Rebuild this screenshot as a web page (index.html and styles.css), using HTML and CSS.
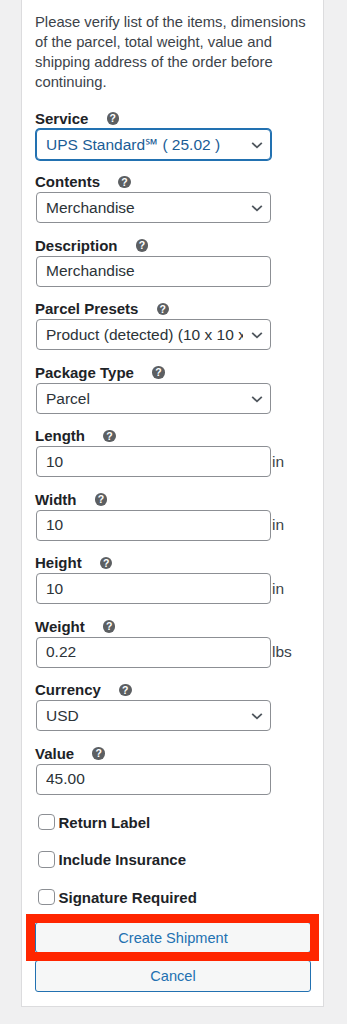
FILE: index.html
```html
<!DOCTYPE html>
<html lang="en">
    <head>
        <meta charset="UTF-8" />
        <meta name="viewport" content="width=device-width, initial-scale=1.0" />
        <title>Create Shipment</title>
        <link rel="stylesheet" href="styles.css">
    </head>

    <body>
        <div class="panel">
            <p class="note">Please verify list of the items, dimensions of the parcel, total weight, value and shipping address of the order before continuing.</p>

            <div class="field">
                <label class="field-label">Service <span class="help-tip">?</span></label>
                <div class="control">
                    <select class="is-focus">
                        <option>UPS Standard℠ ( 25.02 )</option>
                    </select>
                </div>
            </div>
            <div class="field">
                <label class="field-label">Contents <span class="help-tip">?</span></label>
                <div class="control">
                    <select>
                        <option>Merchandise</option>
                    </select>
                </div>
            </div>
            <div class="field">
                <label class="field-label">Description <span class="help-tip">?</span></label>
                <div class="control">
                    <input type="text" value="Merchandise" />
                </div>
            </div>
            <div class="field">
                <label class="field-label">Parcel Presets <span class="help-tip">?</span></label>
                <div class="control">
                    <select>
                        <option>Product (detected) (10 x 10 x 10 in)</option>
                    </select>
                </div>
            </div>
            <div class="field">
                <label class="field-label">Package Type <span class="help-tip">?</span></label>
                <div class="control">
                    <select>
                        <option>Parcel</option>
                    </select>
                </div>
            </div>
            <div class="field">
                <label class="field-label">Length <span class="help-tip">?</span></label>
                <div class="control">
                    <input type="text" value="10" /><span class="unit">in</span>
                </div>
            </div>
            <div class="field">
                <label class="field-label">Width <span class="help-tip">?</span></label>
                <div class="control">
                    <input type="text" value="10" /><span class="unit">in</span>
                </div>
            </div>
            <div class="field">
                <label class="field-label">Height <span class="help-tip">?</span></label>
                <div class="control">
                    <input type="text" value="10" /><span class="unit">in</span>
                </div>
            </div>
            <div class="field">
                <label class="field-label">Weight <span class="help-tip">?</span></label>
                <div class="control">
                    <input type="text" value="0.22" /><span class="unit">lbs</span>
                </div>
            </div>
            <div class="field">
                <label class="field-label">Currency <span class="help-tip">?</span></label>
                <div class="control">
                    <select>
                        <option>USD</option>
                    </select>
                </div>
            </div>
            <div class="field">
                <label class="field-label">Value <span class="help-tip">?</span></label>
                <div class="control">
                    <input type="text" value="45.00" />
                </div>
            </div>

            <div class="options">
                <label class="check"><input type="checkbox" />Return Label</label>
                <label class="check"><input type="checkbox" />Include Insurance</label>
                <label class="check"><input type="checkbox" />Signature Required</label>
            </div>

            <div class="actions">
                <div class="highlight">
                    <button class="button">Create Shipment</button>
                </div>
                <button class="button">Cancel</button>
            </div>
        </div>
    </body>
</html>
```

FILE: styles.css
```css
* {
    padding: 0;
    margin: 0;
    box-sizing: border-box;
}

body {
    background-color: #f0f0f1;
    font-family: "Liberation Sans", Arial, sans-serif;
    color: #1d2327;
}

.panel {
    width: 303px;
    margin-left: 21px;
    padding: 11.5px 12px 14px 13px;
    background-color: #fff;
    border: 1px solid #dcdcde;
    border-top: none;
}

.note {
    font-size: 14.8px;
    line-height: 20.3px;
    color: #3c434a;
    margin-bottom: 16px;
}

.field {
    margin-bottom: 12.5px;
}

.field-label {
    display: block;
    height: 20px;
    line-height: 20px;
    font-size: 15px;
    font-weight: 700;
    color: #1d2327;
}

.help-tip {
    display: inline-block;
    width: 12.5px;
    height: 12.5px;
    margin-left: 14px;
    border-radius: 50%;
    background-color: #5c5f62;
    color: #fff;
    font-size: 10.5px;
    font-weight: 700;
    line-height: 12.5px;
    text-align: center;
    vertical-align: middle;
    position: relative;
    top: -1px;
}

.control {
    display: flex;
    align-items: center;
}

.control input,
.control select {
    width: 235px;
    height: 31px;
    margin: 0 1px;
    padding: 0 9px;
    border: 1px solid #8c8f94;
    border-radius: 4px;
    background-color: #fff;
    font-family: "Liberation Sans", Arial, sans-serif;
    font-size: 15.5px;
    color: #2c3338;
    outline: none;
}

.control select {
    appearance: none;
    -webkit-appearance: none;
    padding-right: 27px;
    background-image: url("data:image/svg+xml,%3Csvg xmlns='http://www.w3.org/2000/svg' width='20' height='20'%3E%3Cpath d='M4 7.2l6 5.8 6-5.8' fill='none' stroke='%2350575e' stroke-width='2.2'/%3E%3C/svg%3E");
    background-repeat: no-repeat;
    background-position: right 5px top 55%;
    background-size: 16px 16px;
}

.control select.is-focus {
    border-color: #2271b1;
    box-shadow: 0 0 0 1px #2271b1;
    color: #1b5d96;
}

.unit {
    font-size: 15.5px;
    color: #3c434a;
}

.options {
    display: flex;
    flex-direction: column;
    gap: 17.5px;
    padding-top: 5px;
}

.check {
    display: flex;
    align-items: center;
    height: 20px;
    font-size: 15px;
    font-weight: 700;
    color: #1d2327;
}

.check input {
    appearance: none;
    -webkit-appearance: none;
    width: 16.5px;
    height: 16.5px;
    margin: 0 4px 0 3px;
    border: 1px solid #8c8f94;
    border-radius: 4px;
    background-color: #fff;
}

.actions {
    display: flex;
    flex-direction: column;
    gap: 7px;
    margin-top: 15px;
}

.highlight {
    position: relative;
}

/* 标注框，盖在按钮上 */
.highlight::after {
    content: "";
    position: absolute;
    top: -8.5px;
    left: -9px;
    right: -8px;
    bottom: -7.5px;
    border: 9px solid #ff2600;
    pointer-events: none;
}

.button {
    display: block;
    width: 100%;
    height: 31px;
    border: 1px solid #2271b1;
    border-radius: 3px;
    background-color: #f6f7f7;
    color: #2271b1;
    font-family: "Liberation Sans", Arial, sans-serif;
    font-size: 14.6px;
    cursor: pointer;
}

.actions > .button {
    height: 32px;
}
```
